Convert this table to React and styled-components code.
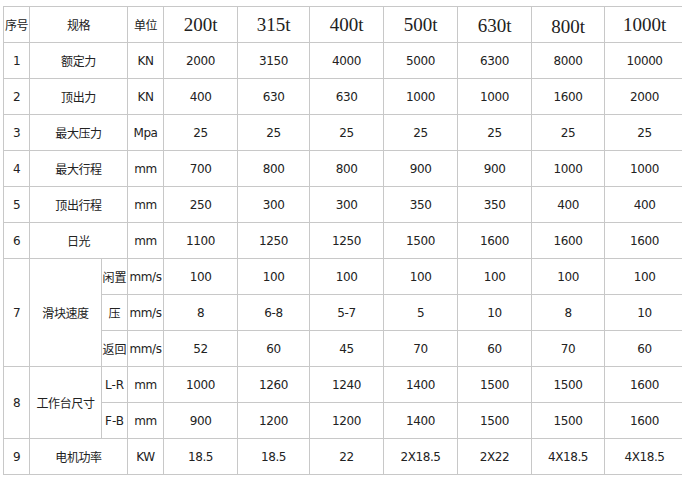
import React from 'react'
import styled, { createGlobalStyle } from 'styled-components'

const GlobalStyle = createGlobalStyle`
  html, body {
    margin: 0;
    padding: 0;
    background: #ffffff;
    overflow: hidden;
  }
`

const tonnage = [
  { label: '200t', dy: 0 },
  { label: '315t', dy: 0 },
  { label: '400t', dy: 0 },
  { label: '500t', dy: 0 },
  { label: '630t', dy: 1 },
  { label: '800t', dy: 2 },
  { label: '1000t', dy: -1 },
]

const widths = [26, 72, 26, 36, 74, 72, 74, 74, 74, 73, 80]

const simpleRows = [
  ['1', '额定力', 'KN', ['2000', '3150', '4000', '5000', '6300', '8000', '10000']],
  ['2', '顶出力', 'KN', ['400', '630', '630', '1000', '1000', '1600', '2000']],
  ['3', '最大压力', 'Mpa', ['25', '25', '25', '25', '25', '25', '25']],
  ['4', '最大行程', 'mm', ['700', '800', '800', '900', '900', '1000', '1000']],
  ['5', '顶出行程', 'mm', ['250', '300', '300', '350', '350', '400', '400']],
  ['6', '日光', 'mm', ['1100', '1250', '1250', '1500', '1600', '1600', '1600']],
]

const groups = [
  {
    no: '7',
    name: '滑块速度',
    rows: [
      ['闲置', 'mm/s', ['100', '100', '100', '100', '100', '100', '100']],
      ['压', 'mm/s', ['8', '6-8', '5-7', '5', '10', '8', '10']],
      ['返回', 'mm/s', ['52', '60', '45', '70', '60', '70', '60']],
    ],
  },
  {
    no: '8',
    name: '工作台尺寸',
    rows: [
      ['L-R', 'mm', ['1000', '1260', '1240', '1400', '1500', '1500', '1600']],
      ['F-B', 'mm', ['900', '1200', '1200', '1400', '1500', '1500', '1600']],
    ],
  },
]

const lastRow = ['9', '电机功率', 'KW', ['18.5', '18.5', '22', '2X18.5', '2X22', '4X18.5', '4X18.5']]

function App() {
  return (
    <Page>
      <GlobalStyle />
      <SpecTable>
        <colgroup>
          {widths.map((w, i) => (
            <col key={i} style={{ width: w }} />
          ))}
        </colgroup>
        <tbody>
          <Row>
            <Cell>序号</Cell>
            <Cell colSpan={2}>规格</Cell>
            <Cell>单位</Cell>
            {tonnage.map(t => (
              <HeadCell key={t.label} $dy={t.dy}>{t.label}</HeadCell>
            ))}
          </Row>
          {simpleRows.map(([no, name, unit, vals]) => (
            <Row key={no}>
              <Cell>{no}</Cell>
              <Cell colSpan={2}>{name}</Cell>
              <Cell>{unit}</Cell>
              {vals.map((v, i) => (
                <Cell key={i}>{v}</Cell>
              ))}
            </Row>
          ))}
          {groups.map(g =>
            g.rows.map(([sub, unit, vals], ri) => (
              <Row key={g.no + sub}>
                {ri === 0 && <Cell rowSpan={g.rows.length}>{g.no}</Cell>}
                {ri === 0 && <Cell rowSpan={g.rows.length}>{g.name}</Cell>}
                <SubCell>{sub}</SubCell>
                <Cell>{unit}</Cell>
                {vals.map((v, i) => (
                  <Cell key={i}>{v}</Cell>
                ))}
              </Row>
            ))
          )}
          <Row>
            <Cell>{lastRow[0]}</Cell>
            <Cell colSpan={2}>{lastRow[1]}</Cell>
            <Cell>{lastRow[2]}</Cell>
            {lastRow[3].map((v, i) => (
              <Cell key={i}>{v}</Cell>
            ))}
          </Row>
        </tbody>
      </SpecTable>
    </Page>
  )
}

export default App

const Page = styled.div`
  padding: 6px 0 0 3px;
  width: 682px;
  height: 479px;
  box-sizing: border-box;
  overflow: hidden;
`

const SpecTable = styled.table`
  border-collapse: collapse;
  table-layout: fixed;
  width: ${widths.reduce((a, b) => a + b, 0)}px;
  color: #222222;
  font-family: "DejaVu Sans", "Noto Sans CJK SC", sans-serif;
  font-size: 12px;
`

const Row = styled.tr`
  height: 36px;
`

const Cell = styled.td`
  border: 1px solid #c8c8c8;
  padding: 0;
  text-align: center;
  vertical-align: middle;
  white-space: nowrap;
  letter-spacing: -0.4px;
`

const SubCell = styled(Cell)`
  letter-spacing: 0;
  overflow: visible;
`

const HeadCell = styled(Cell)`
  font-family: "Liberation Serif", "Noto Sans CJK SC", serif;
  font-size: 19px;
  letter-spacing: 0;
  padding-top: ${p => p.$dy * 2}px;
`
